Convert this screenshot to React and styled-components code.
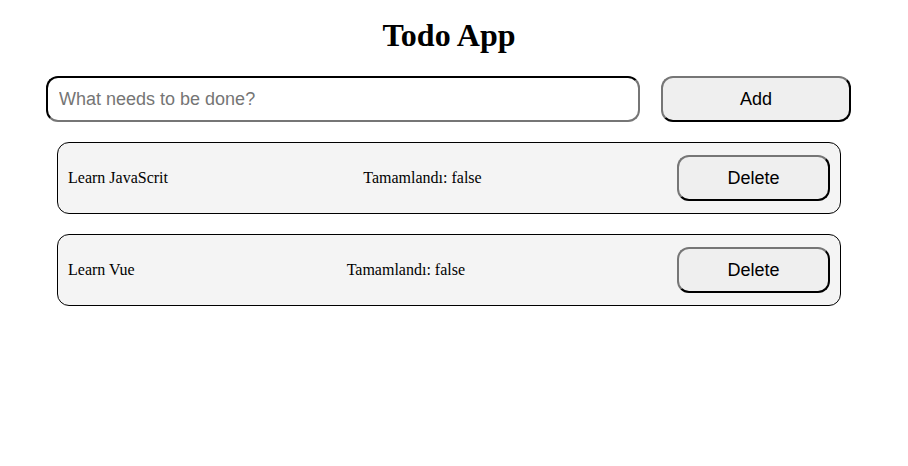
import styled, { createGlobalStyle } from "styled-components";

const GlobalStyle = createGlobalStyle`
    body {
        margin: 0;
        background: #fff;
        font-family: "Liberation Serif", "Times New Roman", serif;
    }
`;

const todos = [
    { id: 1, text: "Learn JavaScrit", completed: false },
    { id: 2, text: "Learn Vue", completed: false },
];

export default function App() {
    return (
        <>
            <GlobalStyle />
            <Wrapper>
                <Title>Todo App</Title>
                <Form onSubmit={e => e.preventDefault()}>
                    <Input placeholder="What needs to be done?" />
                    <AddButton type="submit">Add</AddButton>
                </Form>
                <List>
                    {todos.map(todo => (
                        <Item key={todo.id}>
                            <ItemText>{todo.text}</ItemText>
                            <ItemText>Tamamlandı: {String(todo.completed)}</ItemText>
                            <DeleteButton>Delete</DeleteButton>
                        </Item>
                    ))}
                </List>
            </Wrapper>
        </>
    );
}

const Wrapper = styled.div`
    width: 806px;
    margin-left: 46px;
    padding-top: 17px;
`;
const Title = styled.h1`
    margin: 0 0 23px;
    text-align: center;
    font-size: 32px;
    line-height: 36px;
    font-weight: 700;
`;
const Form = styled.form`
    display: flex;
    gap: 21px;
    margin-bottom: 20px;
`;
const Input = styled.input`
    box-sizing: border-box;
    width: 594px;
    height: 46px;
    padding: 0 11px;
    border: 2px inset #767676;
    border-top-color: #1a1a1a;
    border-left-color: #1a1a1a;
    border-radius: 12px;
    font-family: "Liberation Sans", Arial, sans-serif;
    font-size: 18px;
    outline: none;
    &::placeholder {
        color: #757575;
    }
`;
const BaseButton = styled.button`
    box-sizing: border-box;
    height: 46px;
    background: #efefef;
    border: 2px outset #767676;
    border-bottom-color: #1a1a1a;
    border-right-color: #1a1a1a;
    border-radius: 12px;
    font-family: "Liberation Sans", Arial, sans-serif;
    font-size: 18px;
    color: #000;
    cursor: pointer;
`;
const AddButton = styled(BaseButton)`
    width: 190px;
`;
const DeleteButton = styled(BaseButton)`
    width: 153px;
`;
const List = styled.ul`
    list-style: none;
    margin: 0 11px;
    padding: 0;
    display: flex;
    flex-direction: column;
    gap: 20px;
`;
const Item = styled.li`
    box-sizing: border-box;
    height: 72px;
    display: flex;
    align-items: center;
    justify-content: space-between;
    padding: 0 10px;
    background: #f4f4f4;
    border: 1px solid #000;
    border-radius: 12px;
`;
const ItemText = styled.span`
    font-size: 16px;
`;
